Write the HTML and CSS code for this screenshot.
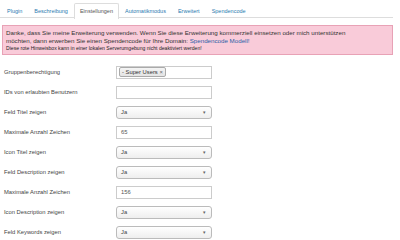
FILE: index.html
```html
<!DOCTYPE html>
<html lang="de">
<head>
    <meta charset="UTF-8">
    <title>Einstellungen</title>
    <link rel="stylesheet" href="styles.css">
</head>
<body>
    <ul class="tabs">
        <li>Plugin</li>
        <li>Beschreibung</li>
        <li class="active">Einstellungen</li>
        <li>Automatikmodus</li>
        <li>Erweitert</li>
        <li>Spendencode</li>
    </ul>

    <div class="alert">
        <div class="alert-main">Danke, dass Sie meine Erweiterung verwenden. Wenn Sie diese Erweiterung kommerziell einsetzen oder mich unterstützen<br>möchten, dann erwerben Sie einen Spendencode für Ihre Domain: <a href="#">Spendencode Modell!</a></div>
        <div class="alert-note">Diese rote Hinweisbox kann in einer lokalen Serverumgebung nicht deaktiviert werden!</div>
    </div>

    <div class="form">
        <div class="row">
            <label>Gruppenberechtigung</label>
            <div class="control multi"><span class="tag">- Super Users <b>×</b></span></div>
        </div>
        <div class="row">
            <label>IDs von erlaubten Benutzern</label>
            <div class="control input"></div>
        </div>
        <div class="row">
            <label>Feld Titel zeigen</label>
            <div class="control select">Ja<span class="arrow">▾</span></div>
        </div>
        <div class="row">
            <label>Maximale Anzahl Zeichen</label>
            <div class="control input">65</div>
        </div>
        <div class="row">
            <label>Icon Titel zeigen</label>
            <div class="control select">Ja<span class="arrow">▾</span></div>
        </div>
        <div class="row">
            <label>Feld Description zeigen</label>
            <div class="control select">Ja<span class="arrow">▾</span></div>
        </div>
        <div class="row">
            <label>Maximale Anzahl Zeichen</label>
            <div class="control input">156</div>
        </div>
        <div class="row">
            <label>Icon Description zeigen</label>
            <div class="control select">Ja<span class="arrow">▾</span></div>
        </div>
        <div class="row">
            <label>Feld Keywords zeigen</label>
            <div class="control select">Ja<span class="arrow">▾</span></div>
        </div>
    </div>
</body>
</html>
```

FILE: styles.css
```css
body {
    margin: 0;
    padding: 3px 0 0 0;
    font-family: "Liberation Sans", Arial, sans-serif;
    font-size: 5.8px;
    color: #333;
    background: #fff;
    overflow: hidden;
}
.tabs {
    list-style: none;
    margin: 0 7px 0 0;
    padding: 0 0 0 1px;
    display: flex;
    border-bottom: 1px solid #ddd;
    height: 14px;
}
.tabs li {
    padding: 0 5px;
    font-size: 5.5px;
    line-height: 14px;
    color: #2a7ab0;
    border: 1px solid transparent;
    border-bottom: none;
    border-radius: 2px 2px 0 0;
    height: 14px;
}
.tabs li.active {
    color: #555;
    border-color: #ddd;
    background: #fff;
    height: 15px;
}
.alert {
    margin: 7px 7px 0 2px;
    background: #f9cbd9;
    border: 1px solid #e8a2b6;
    padding: 3px 3px 2px 3px;
    color: #333;
}
.alert-main {
    font-size: 6.2px;
    line-height: 8px;
    white-space: nowrap;
}
.alert-main a {
    color: #2b5fa8;
    text-decoration: none;
}
.alert-note {
    font-size: 5.1px;
    line-height: 7px;
    color: #222;
}
.form {
    padding: 7px 0 0 4px;
}
.row {
    display: flex;
    align-items: center;
    height: 20px;
}
.row label {
    width: 112px;
    color: #444;
}
.control {
    box-sizing: border-box;
    width: 96px;
    height: 13px;
    border: 1px solid #ccc;
    background: #fff;
    display: flex;
    align-items: center;
    padding: 0 4px;
    color: #555;
}
.select {
    border-radius: 3px;
    border-color: #bbb;
    background: linear-gradient(#fff, #eee);
    justify-content: space-between;
    color: #444;
}
.arrow {
    font-size: 5px;
    color: #666;
    padding-right: 1px;
}
.multi {
    padding: 0 2px;
}
.tag {
    border: 1px solid #aaa;
    border-radius: 2px;
    background: linear-gradient(#f4f4f4, #e4e4e4);
    padding: 0 2px;
    line-height: 8px;
    font-size: 5.8px;
    color: #333;
}
.tag b {
    font-weight: normal;
    color: #666;
}
```
